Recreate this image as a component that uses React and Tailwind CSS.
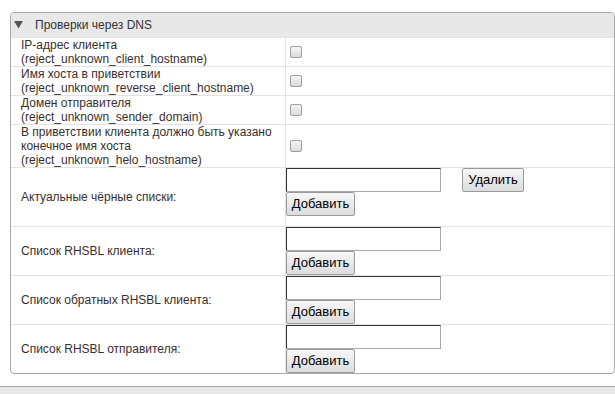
import React from "react";

function Checkbox() {
  return (
    <div className="ml-[4px] w-[12px] h-[12px] rounded-[2px] border border-[#a0a0a0] bg-gradient-to-b from-[#f6f6f6] to-[#dadada]" />
  );
}

function Btn({ children, w }) {
  return (
    <div
      className={`${w} h-[24px] flex items-center justify-center border border-[#9a9a9a] rounded-[2px] bg-gradient-to-b from-[#f7f7f7] to-[#dcdcdc] text-[13px] text-black`}
    >
      {children}
    </div>
  );
}

function Input() {
  return (
    <div className="w-[155px] h-[24px] bg-white border border-t-[#333] border-l-[#333] border-r-[#a9a9a9] border-b-[#a9a9a9]" />
  );
}

function CheckRow({ lines }) {
  return (
    <div className="flex border-b border-[#e3e3e3]">
      <div className="w-[274px] pl-[10px] leading-[14px] py-0">
        {lines.map((l, i) => (
          <div key={i}>{l}</div>
        ))}
      </div>
      <div className="flex-1 border-l border-[#e3e3e3] flex items-center">
        <Checkbox />
      </div>
    </div>
  );
}

function ListRow({ label, remove, last, extra }) {
  return (
    <div className={`flex ${last ? "" : "border-b border-[#e3e3e3]"}`}>
      <div className="w-[274px] pl-[10px] flex items-center leading-[14px]">{label}</div>
      <div className={`flex-1 border-l border-[#e3e3e3] ${extra ? "pb-[10px]" : "pb-0"}`}>
        <div className="flex items-center">
          <Input />
          {remove && (
            <div className="ml-[21px]">
              <Btn w="w-[62px]">Удалить</Btn>
            </div>
          )}
        </div>
        <Btn w="w-[69px]">Добавить</Btn>
      </div>
    </div>
  );
}

export default function App() {
  return (
    <div className="w-[615px] h-[394px] bg-white overflow-hidden flex flex-col font-['Liberation_Sans',Arial,sans-serif] text-[12px] text-[#3a2e2e]">
      <div className="ml-[10px] mt-[12px] w-[605px] border border-[#a8a8a8] rounded-[4px] overflow-hidden">
        <div className="h-[25px] bg-[#e8e8e8] flex items-center border-b border-[#e3e3e3]">
          <svg width="9" height="8" viewBox="0 0 9 8" className="ml-[3px]">
            <path d="M0 0 H9 L4.5 7.5 Z" fill="#555" />
          </svg>
          <span className="ml-[12px] text-[12px] text-[#333]">Проверки через DNS</span>
        </div>
        <CheckRow lines={["IP-адрес клиента", "(reject_unknown_client_hostname)"]} />
        <CheckRow lines={["Имя хоста в приветствии", "(reject_unknown_reverse_client_hostname)"]} />
        <CheckRow lines={["Домен отправителя", "(reject_unknown_sender_domain)"]} />
        <CheckRow
          lines={[
            "В приветствии клиента должно быть указано",
            "конечное имя хоста",
            "(reject_unknown_helo_hostname)",
          ]}
        />
        <ListRow label="Актуальные чёрные списки:" remove extra />
        <ListRow label="Список RHSBL клиента:" />
        <ListRow label="Список обратных RHSBL клиента:" />
        <ListRow label="Список RHSBL отправителя:" last />
      </div>
      <div className="mt-[12px] flex-1 border-t border-[#a8a8a8] bg-[#e8e8e8]" />
    </div>
  );
}
